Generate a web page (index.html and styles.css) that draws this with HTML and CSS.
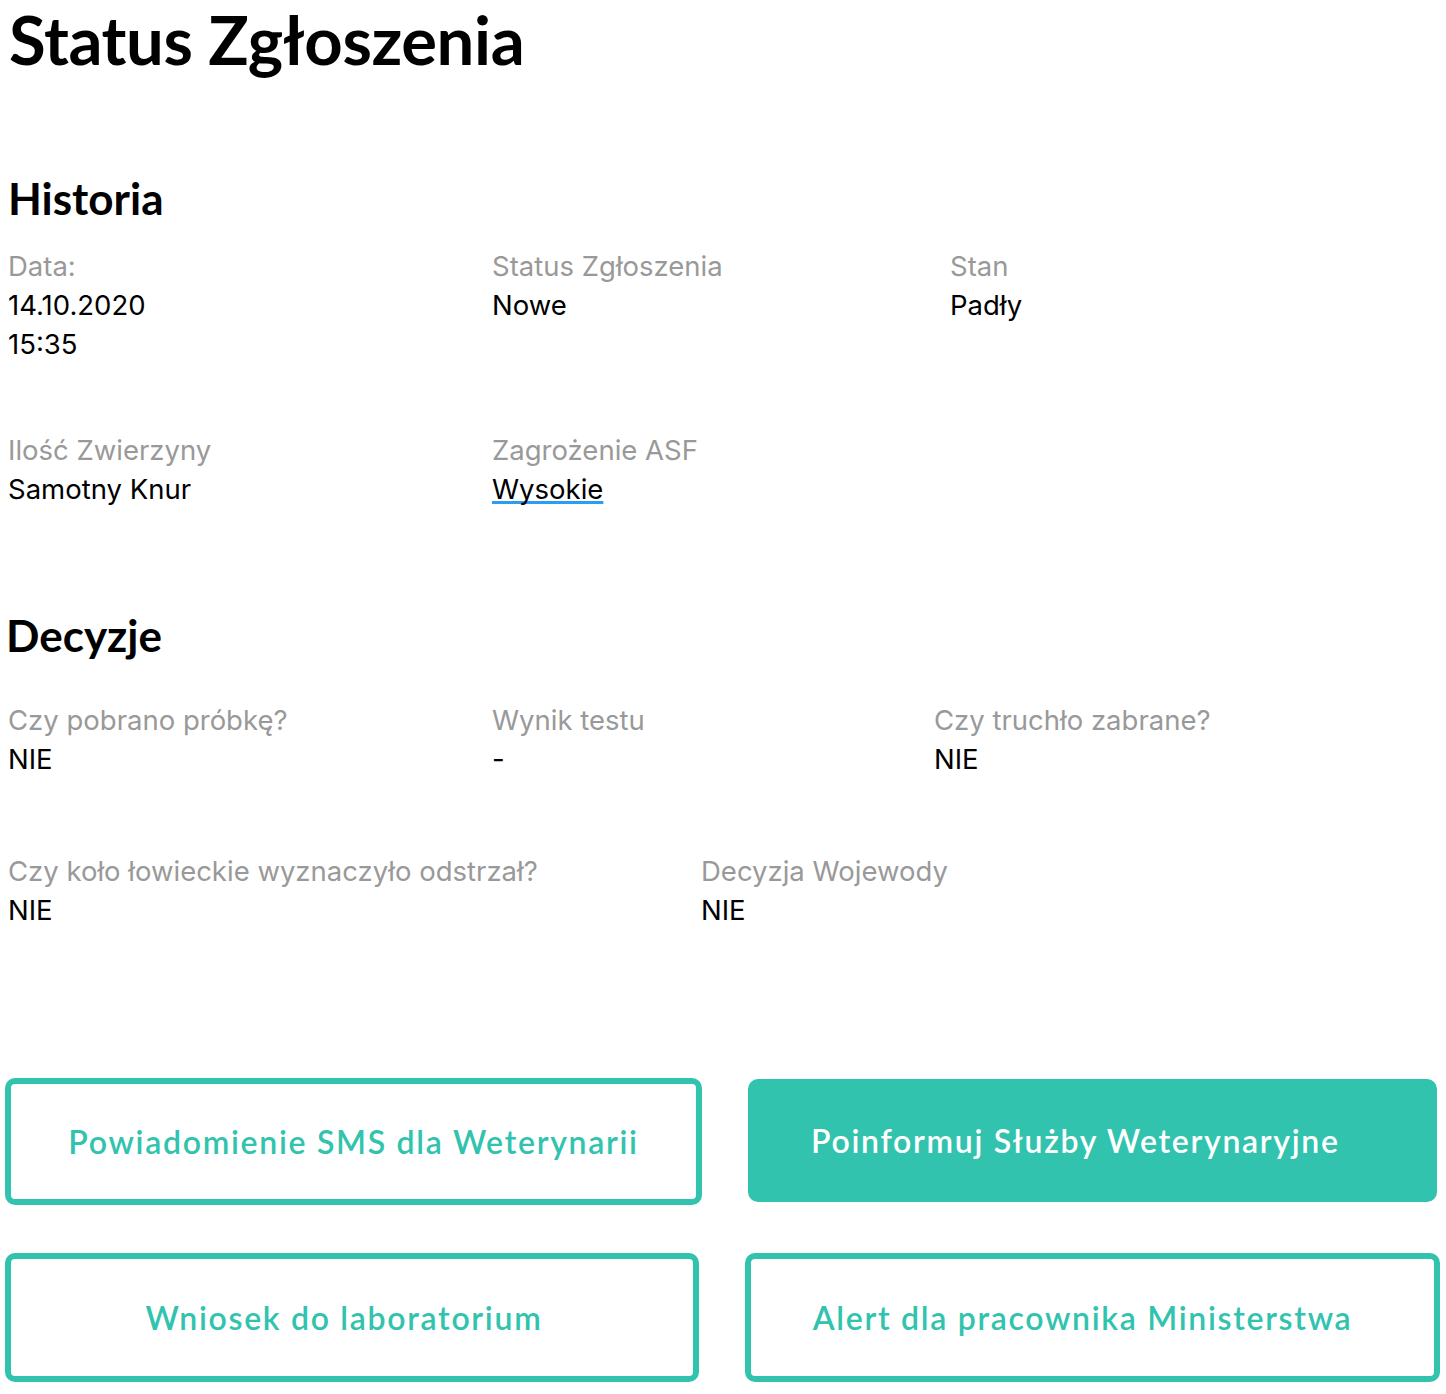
FILE: index.html
```html
<!DOCTYPE html>
<html lang="pl">
<head>
<meta charset="utf-8">
<title>Status Zgłoszenia</title>
<link rel="stylesheet" href="styles.css">
</head>
<body>
<main class="page">
  <h1 class="title">Status Zgłoszenia</h1>

  <section class="section section-history">
    <h2 class="heading">Historia</h2>
    <div class="row row-h1">
      <div class="field"><div class="label">Data:</div><div class="value">14.10.2020<br>15:35</div></div>
      <div class="field"><div class="label">Status Zgłoszenia</div><div class="value">Nowe</div></div>
      <div class="field"><div class="label">Stan</div><div class="value">Padły</div></div>
    </div>
    <div class="row row-h2">
      <div class="field"><div class="label">Ilość Zwierzyny</div><div class="value">Samotny Knur</div></div>
      <div class="field"><div class="label">Zagrożenie ASF</div><div class="value"><span class="marked">Wysokie</span></div></div>
    </div>
  </section>

  <section class="section section-decisions">
    <h2 class="heading heading-dec">Decyzje</h2>
    <div class="row row-d1">
      <div class="field"><div class="label">Czy pobrano próbkę?</div><div class="value">NIE</div></div>
      <div class="field"><div class="label">Wynik testu</div><div class="value">-</div></div>
      <div class="field"><div class="label">Czy truchło zabrane?</div><div class="value">NIE</div></div>
    </div>
    <div class="row row-d2">
      <div class="field"><div class="label">Czy koło łowieckie wyznaczyło odstrzał?</div><div class="value">NIE</div></div>
      <div class="field"><div class="label">Decyzja Wojewody</div><div class="value">NIE</div></div>
    </div>
  </section>

  <section class="actions">
    <button class="btn btn-outline btn-a">Powiadomienie SMS dla Weterynarii</button>
    <button class="btn btn-fill">Poinformuj Służby Weterynaryjne</button>
    <button class="btn btn-outline btn-c">Wniosek do laboratorium</button>
    <button class="btn btn-outline btn-d">Alert dla pracownika Ministerstwa</button>
  </section>
</main>
</body>
</html>
```

FILE: styles.css
```css
html, body {
  margin: 0;
  padding: 0;
  background: #ffffff;
}

.page {
  width: 1446px;
  font-family: Inter, "Liberation Sans", sans-serif;
  color: #000;
}

.title {
  margin: 0;
  padding: 0 0 0 9px;
  font-family: Lato, Inter, sans-serif;
  font-weight: 700;
  font-size: 67px;
  line-height: 78px;
  letter-spacing: -0.4px;
}

.section {
  padding-left: 8px;
}

.section-history {
  margin-top: 94px;
}

.heading {
  margin: 0;
  font-family: Lato, Inter, sans-serif;
  font-weight: 700;
  font-size: 44px;
  line-height: 52px;
}

.heading-dec {
  margin-left: -2px;
}

.row {
  display: grid;
}

.row-h1 {
  margin-top: 23px;
  grid-template-columns: 484px 458px 1fr;
}

.row-h2 {
  margin-top: 67px;
  grid-template-columns: 484px 1fr;
}

.section-decisions {
  margin-top: 100px;
}

.row-d1 {
  margin-top: 40px;
  grid-template-columns: 484px 442px 1fr;
}

.row-d2 {
  margin-top: 73px;
  grid-template-columns: 693px 1fr;
}

.label {
  font-size: 27.5px;
  line-height: 39px;
  color: #999999;
}

.value {
  font-size: 27.5px;
  line-height: 39px;
  color: #000;
}

.marked {
  text-decoration: underline;
  text-decoration-color: #2b9ef2;
  text-decoration-thickness: 3px;
  text-underline-offset: 2px;
  text-decoration-skip-ink: none;
}

.actions {
  margin-top: 148px;
  display: grid;
  grid-template-columns: 697px 695px;
  column-gap: 43px;
  row-gap: 48px;
  padding-left: 5px;
}

.btn {
  box-sizing: border-box;
  height: 127px;
  border-radius: 10px;
  font-family: Lato, Inter, sans-serif;
  font-weight: 600;
  font-size: 32px;
  letter-spacing: 1.7px;
  color: #31c3ae;
  background: #fff;
  border: 6px solid #31c3ae;
  display: flex;
  align-items: center;
  justify-content: center;
  padding: 0;
  cursor: pointer;
}

.btn-fill {
  height: 123px;
  margin: 1px 0 0 3px;
  width: 689px;
  border: none;
  background: #31c3ae;
  color: #fff;
  justify-content: flex-start;
  padding-left: 63px;
}

.btn-c {
  height: 129px;
  width: 694px;
  padding-right: 16px;
}

.btn-d {
  height: 129px;
  padding-right: 20px;
}
```
